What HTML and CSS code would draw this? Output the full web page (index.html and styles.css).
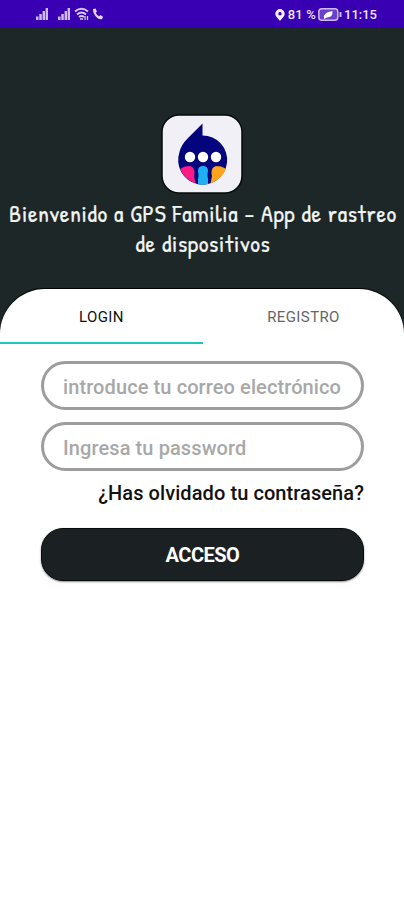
FILE: index.html
```html
<!DOCTYPE html>
<html lang="es">
<head>
<meta charset="utf-8">
<title>GPS Familia</title>
<link rel="stylesheet" href="styles.css">
</head>
<body>
<div class="status">
  <svg class="status-left" width="70" height="14" viewBox="0 0 70 14">
    <g fill="#cfbcf5">
      <path d="M0 9.500h2.500v3.500H0zM3.300 7h2.500v6H3.300zM6.600 4h2.400v9H6.600zM9.600 1H12v12H9.600z"/>
      <path d="M22 9.500h2.500v3.500H22zM25.300 7h2.500v6h-2.500zM28.600 4H31v9h-2.400zM31.600 1H34v12h-2.400z"/>
    </g>
    <g fill="none" stroke="#d8c8f8" stroke-width="1.900">
      <path d="M39 4.500Q45.500-1 52 4.500M41 7.500Q45.500 3.500 50 7.500M43 10Q45.500 7.800 48 10"/>
      <path d="M44 12h3M49 9v4M51.500 9v4" stroke-width="1.300"/>
    </g>
    <path d="M57 2l2.500-.5 1.500 3-1.300 1.200q1.200 2.500 3.300 3.500l1.500-1.200 2.500 1.800-.8 2.200Q62 13 59 8.500 56.500 5 57 2z" fill="#e2d6fb"/>
  </svg>
  <div class="status-right">
    <svg width="10" height="12" viewBox="0 0 10 12"><path fill="#f4efff" fill-rule="evenodd" d="M5 0a4.700 4.700 0 0 1 4.700 4.700C9.700 7.500 7 9 5 12 3 9 .3 7.500.3 4.700A4.700 4.700 0 0 1 5 0zm0 3a1.700 1.700 0 1 0 0 3.400A1.700 1.700 0 0 0 5 3z"/></svg>
    <span class="percent">81 %</span>
    <svg class="battery" width="24" height="13" viewBox="0 0 24 13"><rect x=".8" y=".8" width="19" height="11.400" rx="3" fill="#6840cc" stroke="#cdbbf5" stroke-width="1.500"/><path d="M22.500 4v5" stroke="#cdbbf5" stroke-width="2"/><path d="M6 10Q5 4.500 14.500 3 15 9.500 9 9.500L6 11z" fill="#fff"/></svg>
    <span>11:15</span>
  </div>
</div>
<header class="hero">
  <svg class="logo" width="82" height="80" viewBox="0 0 82 80">
    <defs><clipPath id="drop"><circle cx="42" cy="46" r="24.500"/></clipPath></defs>
    <rect x="1" y="1" width="80" height="78" rx="17" fill="#f1f0f6" stroke="#050909" stroke-width="1.500"/>
    <path d="M41.500 9.500V21.500A24.500 24.500 0 1 1 18.500 38Q20 31 27 24z" fill="#04057c"/>
    <g clip-path="url(#drop)">
      <path d="M17 60q1-8 12-8 6 2 4 10l2 10H17z" fill="#fc1a86"/>
      <path d="M67 60q-1-8-12-8-6 2-4 10l-2 10h18z" fill="#fca41b"/>
      <path d="M37 57q0-5 5-5t5 5q-1 4 0 8v7H37v-7q1-4 0-8z" fill="#1db1f3"/>
    </g>
    <g fill="#fff"><circle cx="29" cy="43" r="5.200"/><circle cx="42" cy="43" r="5.200"/><circle cx="55" cy="43" r="5.200"/></g>
  </svg>
  <h1><span class="line-one">Bienvenido a GPS Familia - App de rastreo</span> <span class="line-two">de dispositivos</span></h1>
</header>
<main class="sheet">
  <nav class="tabs">
    <a class="tab active">LOGIN</a>
    <a class="tab">REGISTRO</a>
  </nav>
  <form class="form">
    <input class="field" type="email" placeholder="introduce tu correo electrónico">
    <input class="field" type="password" placeholder="Ingresa tu password">
    <a class="forgot">¿Has olvidado tu contraseña?</a>
    <button class="submit" type="button">ACCESO</button>
  </form>
</main>
</body>
</html>
```
FILE: styles.css
```css
* { box-sizing: border-box; }
body {
  margin: 0;
  height: 900px;
  overflow: hidden;
  background: linear-gradient(#1d2727 0 333px, #fff 333px);
  font-family: Roboto, sans-serif;
}
.status {
  height: 27px;
  padding: 0 27px 0 36px;
  display: flex;
  justify-content: space-between;
  align-items: center;
  background: #3900b3;
  color: #eee5ff;
}
.status-left { margin-top: 1px; }
.status-right {
  display: flex;
  align-items: center;
  font-size: 13px;
  font-weight: 500;
  line-height: 27px;
  padding-top: 2px;
}
.percent { margin: 0 2px 0 3px; letter-spacing: 0.2px; }
.battery { margin-right: 2px; }
.hero {
  height: 262px;
  padding-top: 87px;
  display: flex;
  flex-direction: column;
  align-items: center;
}
.logo { flex: none; }
h1 {
  margin: 4px 0 0 2px;
  color: #f1f4f3;
  font: 400 24px/30px "Patrick Hand", Lato, sans-serif;
  letter-spacing: 0.65px;
  -webkit-text-stroke: 0.2px #f1f4f3;
  text-align: center;
  white-space: nowrap;
}
h1 span { display: block; }
.sheet {
  height: 611px;
  background: #fff;
  border-radius: 45px 45px 0 0;
  box-shadow: 0 -1px 1px #000;
  clip-path: inset(-2px 0 0 0);
}
.tabs { display: grid; grid-template-columns: 203px 201px; height: 55px; }
.tab {
  display: flex;
  align-items: center;
  justify-content: center;
  padding: 3px 0 0;
  font-size: 15px;
  letter-spacing: 0.4px;
  color: #666;
  border-bottom: 2px solid transparent;
}
.active { color: #111; border-color: #20c5b4; }
.form {
  padding: 17px 40px 0 41px;
  display: flex;
  flex-direction: column;
}
.field {
  width: 323px;
  height: 49px;
  margin: 0 0 12px;
  padding: 3px 10px 0 19px;
  border: 3px solid #9d9d9d;
  border-radius: 25px;
  background: #fff;
  font: 500 20px Roboto, sans-serif;
  letter-spacing: 0.1px;
}
.field::placeholder { color: #a8a8a8; opacity: 1; }
.forgot {
  align-self: flex-end;
  margin-top: -3px;
  font-size: 20px;
  font-weight: 500;
  line-height: 26px;
  letter-spacing: 0.08px;
  color: #111;
}
.submit {
  height: 53px;
  margin-top: 22px;
  padding: 1px 0 0;
  border: 1px solid #060a0a;
  border-radius: 22px;
  background: #1b2122;
  box-shadow: 0 1px 2px #888;
  color: #fff;
  font: 700 20px Roboto, sans-serif;
  letter-spacing: -0.5px;
}
```
